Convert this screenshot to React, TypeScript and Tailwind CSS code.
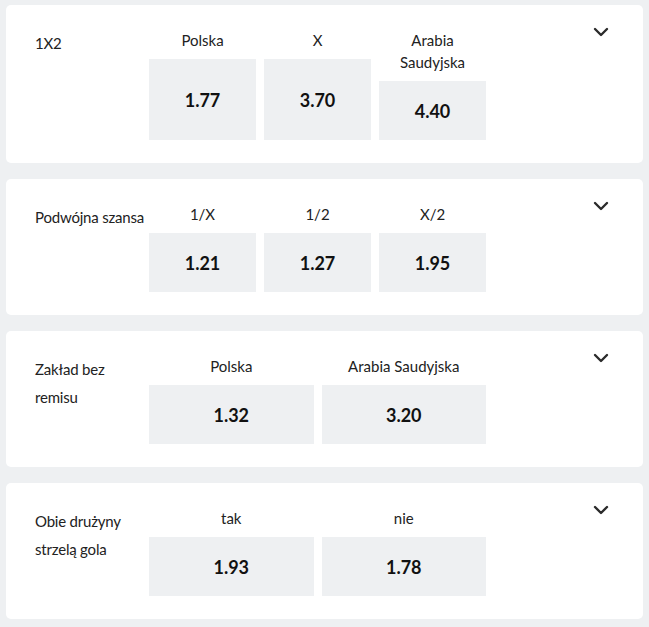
import React from "react";

type Market = {
  title: string;
  cols: { label: string; odd: string }[];
};

const markets: Market[] = [
  {
    title: "1X2",
    cols: [
      { label: "Polska", odd: "1.77" },
      { label: "X", odd: "3.70" },
      { label: "Arabia Saudyjska", odd: "4.40" },
    ],
  },
  {
    title: "Podwójna szansa",
    cols: [
      { label: "1/X", odd: "1.21" },
      { label: "1/2", odd: "1.27" },
      { label: "X/2", odd: "1.95" },
    ],
  },
  {
    title: "Zakład bez remisu",
    cols: [
      { label: "Polska", odd: "1.32" },
      { label: "Arabia Saudyjska", odd: "3.20" },
    ],
  },
  {
    title: "Obie drużyny strzelą gola",
    cols: [
      { label: "tak", odd: "1.93" },
      { label: "nie", odd: "1.78" },
    ],
  },
];

function Chevron() {
  return (
    <svg width="16" height="10" viewBox="0 0 16 10" fill="none">
      <path d="M2 2L8 8L14 2" stroke="#2b2b2b" strokeWidth="2.4" strokeLinecap="round" strokeLinejoin="round" />
    </svg>
  );
}

function Card({ m }: { m: Market }) {
  const three = m.cols.length === 3;
  return (
    <div className="relative flex bg-white rounded-[5px] pl-[29px] pt-[24px] pb-[23px]">
      <div className="w-[114px] shrink-0 text-[15px] leading-[28px] tracking-[-0.2px] text-[#222]">{m.title}</div>
      <div className="flex gap-[8px] w-[337px]">
        {m.cols.map((c, i) => (
          <div key={i} className={`flex flex-col ${three ? "w-[107px]" : "w-[165px]"}`}>
            <div className="text-center text-[15px] leading-[22px] text-[#222] mb-[8px] px-2">{c.label}</div>
            <div className="flex-1 min-h-[59px] pt-[1px] bg-[#eef0f2] flex items-center justify-center text-[18px] font-bold text-[#111]">
              {c.odd}
            </div>
          </div>
        ))}
      </div>
      <div className="absolute right-[34px] top-[22px]">
        <Chevron />
      </div>
    </div>
  );
}

export default function App() {
  return (
    <div
      className="min-h-[627px] bg-[#eef0f2] pl-[6px] pr-[6px] pt-[5px] flex flex-col gap-[16px]"
      style={{ fontFamily: '"Lato", "Noto Sans", sans-serif' }}
    >
      {markets.map((m, i) => (
        <Card key={i} m={m} />
      ))}
    </div>
  );
}
